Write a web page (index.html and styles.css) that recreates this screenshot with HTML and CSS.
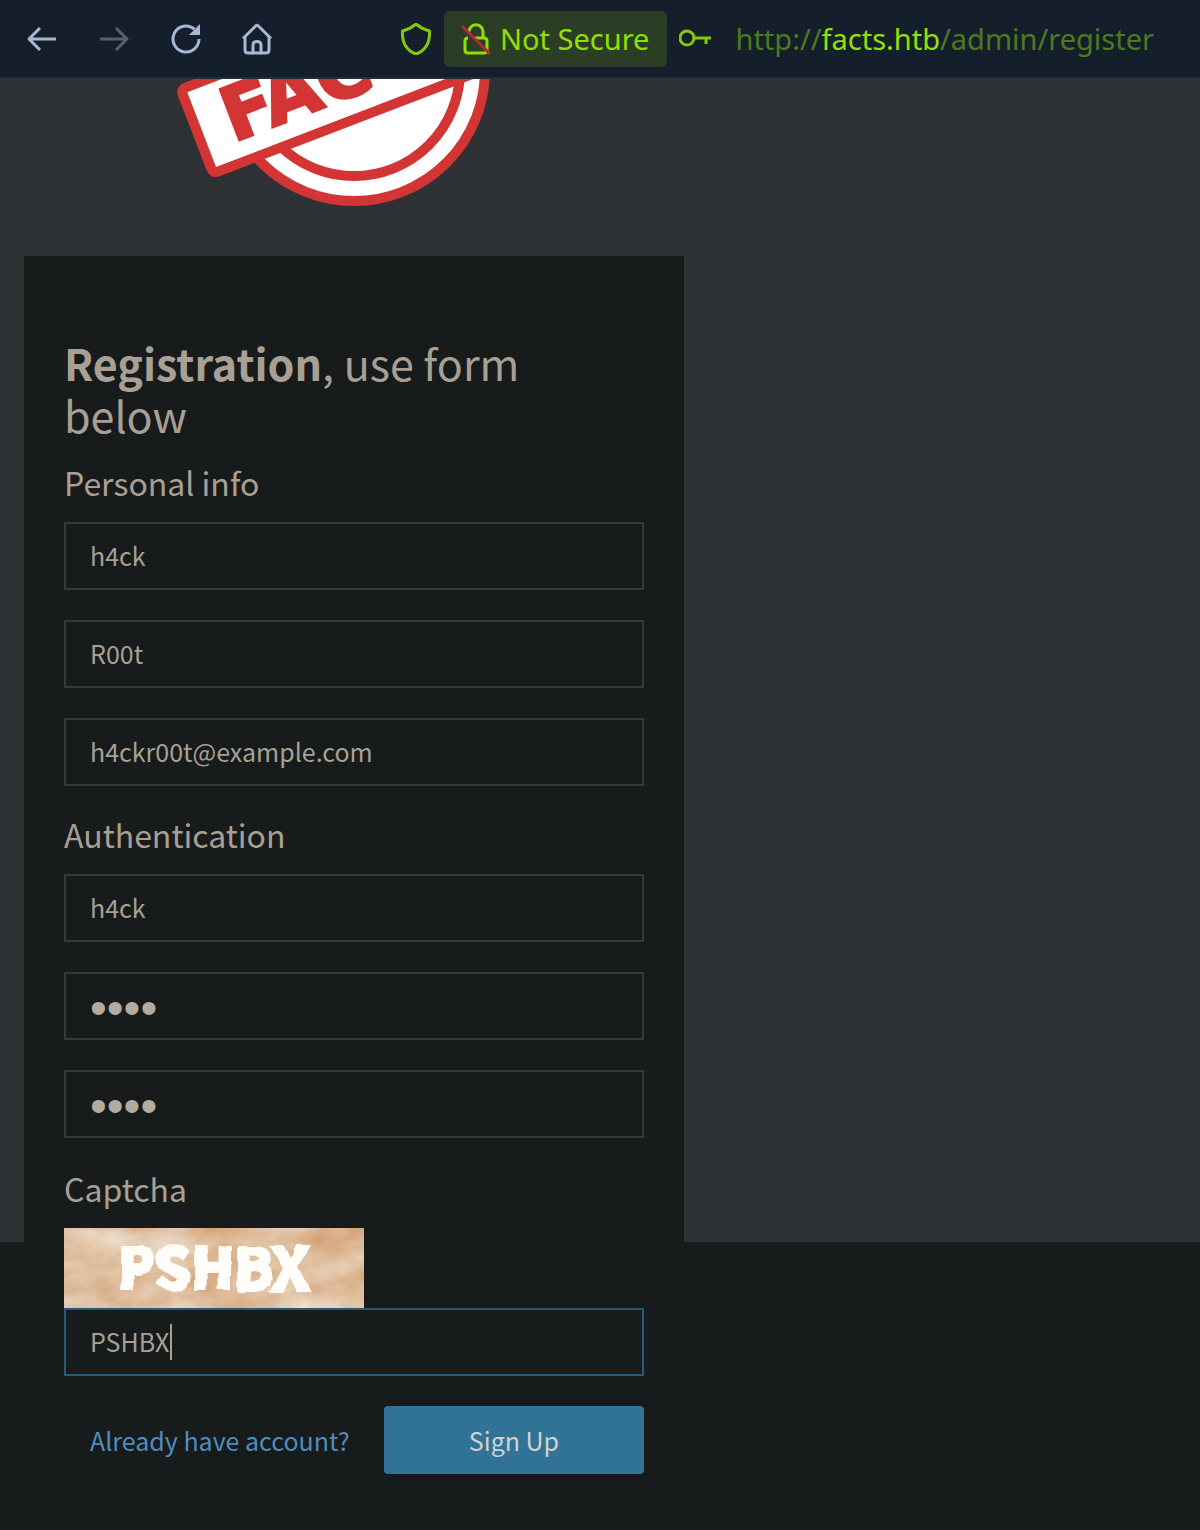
FILE: index.html
```
<!DOCTYPE html>
<html lang="en">
<head>
    <meta charset="UTF-8">
    <meta name="viewport" content="width=device-width, initial-scale=1.0">
    <title>Registration</title>
    <link rel="stylesheet" href="styles.css">
</head>
<body>
    <header class="toolbar">
        <nav class="nav-buttons">
            <button type="button" class="icon-button" aria-label="Back">
                <svg viewBox="0 0 32 32"><path d="M30 16H3M14 5L3 16L14 27"/></svg>
            </button>
            <button type="button" class="icon-button" aria-label="Forward" disabled>
                <svg viewBox="0 0 32 32"><path d="M2 16H29M18 5L29 16L18 27"/></svg>
            </button>
            <button type="button" class="icon-button" aria-label="Reload">
                <svg viewBox="0 0 32 32"><path d="M24.500 6.200A13 13 0 1 0 29 16"/><path class="solid" d="M30 1V12H19Z"/></svg>
            </button>
            <button type="button" class="icon-button" aria-label="Home">
                <svg viewBox="0 0 32 32"><path d="M1 15.500L13.600 3Q15 1.700 16.400 3L29 15.500M3 14V27Q3 30 6 30H24Q27 30 27 27V14M11 30V22Q11 18.500 15 18.500T19 22V30"/></svg>
            </button>
        </nav>

        <div class="address-bar">
            <button type="button" class="icon-button" aria-label="Tracking protection">
                <svg viewBox="0 0 32 32"><path d="M16 1Q22 6 29.500 8C30 18 27 27 16 31C5 27 2 18 2.500 8Q10 6 16 1Z"/></svg>
            </button>
            <button type="button" class="security">
                <svg viewBox="0 0 32 32">
                    <path d="M9 9A7 7 0 0 1 23 8.500V15M14 15H24Q27 15 27 18V27Q27 30 24 30H8Q5 30 5 27V18Q5 15 8 15"/>
                    <path class="slash" d="M2 3L30 31"/>
                </svg>
                Not Secure
            </button>
            <button type="button" class="icon-button" aria-label="Saved passwords">
                <svg viewBox="0 0 32 32"><circle cx="8" cy="15" r="7"/><path d="M15 15H32M27 15V21"/></svg>
            </button>
            <div class="url">http://<span class="domain">facts.htb</span>/admin/register</div>
        </div>
    </header>

    <main class="page">
        <div class="container">
            <svg class="logo" viewBox="0 0 660 128" aria-label="Facts">
                <g class="stamp">
                    <circle cx="330" cy="-9" r="131"/>
                    <circle cx="330" cy="-9" r="106"/>
                    <g transform="translate(192 88) rotate(-21)">
                        <rect x="-5" y="-85" width="320" height="90" rx="5"/>
                        <text x="25" y="-17">FAC</text>
                    </g>
                </g>
            </svg>

            <form class="card">
                <h3><strong>Registration</strong>, use form below</h3>

                <h4>Personal info</h4>
                <input type="text" class="form-control" name="first_name" aria-label="First name" value="h4ck">
                <input type="text" class="form-control" name="last_name" aria-label="Last name" value="R00t">
                <input type="email" class="form-control" name="email" aria-label="Email" value="h4ckr00t@example.com">

                <h4>Authentication</h4>
                <input type="text" class="form-control" name="username" aria-label="Username" value="h4ck">
                <input type="password" class="form-control" name="password" aria-label="Password" value="h4ck">
                <input type="password" class="form-control" name="password_confirmation" aria-label="Confirm password" value="h4ck">

                <div class="captcha-group">
                    <h4>Captcha</h4>
                    <svg class="captcha" viewBox="0 0 300 80" aria-label="Captcha">
                        <filter id="paper" x="0" y="0" width="100%" height="100%" color-interpolation-filters="sRGB">
                            <feTurbulence type="fractalNoise" baseFrequency="0.016 0.03" numOctaves="4" seed="8"/>
                            <feColorMatrix values="0.15 0 0 0 0.8  0.35 0 0 0 0.57  0.5 0 0 0 0.37  0 0 0 0 1"/>
                        </filter>
                        <filter id="rough" color-interpolation-filters="sRGB">
                            <feTurbulence type="fractalNoise" baseFrequency="0.04" numOctaves="1" seed="3"/>
                            <feDisplacementMap in="SourceGraphic" scale="8" xChannelSelector="R" yChannelSelector="G"/>
                        </filter>
                        <rect width="300" height="80" filter="url(#paper)"/>
                        <text x="54" y="61" filter="url(#rough)">PSHBX</text>
                    </svg>
                    <div class="field">
                        <input type="text" class="form-control active" name="captcha" aria-label="Captcha" value="PSHBX">
                        <span class="caret"></span>
                    </div>
                </div>

                <div class="actions">
                    <a href="#" class="login-link">Already have account?</a>
                    <button type="submit" class="btn-primary">Sign Up</button>
                </div>
            </form>
        </div>
    </main>
</body>
</html>
```
FILE: styles.css
```
* {
    box-sizing: border-box;
}
body {
    margin: 0;
    background-color: #171b1b;
    color: #a8a095;
    font-family: "Noto Sans CJK SC", "Open Sans", sans-serif;
    font-size: 25px;
}
button, input {
    font: inherit;
}

/* Browser toolbar */
.toolbar {
    display: flex;
    align-items: center;
    height: 79px;
    padding: 0 26px;
    background-color: #151e2b;
    border-bottom: 2px solid #222d3a;
    font-family: "Noto Sans", sans-serif;
    font-size: 29px;
}
.nav-buttons {
    display: flex;
    gap: 40px;
    margin-right: 126px;
    color: #a9b7d6;
}
.icon-button {
    display: flex;
    padding: 0;
    border: none;
    background: none;
    color: inherit;
}
.icon-button:disabled {
    color: #566071;
}
.toolbar svg {
    width: 32px;
    height: 32px;
    fill: none;
    stroke: currentColor;
    stroke-width: 3;
    stroke-linejoin: round;
}
.toolbar svg .solid {
    fill: currentColor;
    stroke: none;
}
.toolbar svg .slash {
    stroke: #b5253c;
}
.address-bar {
    display: flex;
    flex: 1;
    align-items: center;
    gap: 12px;
    color: #83c80c;
}
.security {
    display: flex;
    align-items: center;
    gap: 8px;
    height: 56px;
    padding: 0 18px 0 16px;
    border: none;
    border-radius: 6px;
    background-color: #2c3d25;
    color: #8fe000;
    white-space: nowrap;
}
.url {
    margin-left: 12px;
    color: #4c7a1e;
    white-space: nowrap;
}
.url .domain {
    color: #94e000;
}

/* Page */
.page {
    background: linear-gradient(#2e3235, #2e3235) no-repeat 0 0 / 100% 1163px;
}
.container {
    max-width: 708px;
    padding: 0 24px;
}
.logo {
    display: block;
    width: 100%;
    margin-bottom: 49px;
}
.stamp {
    fill: #fff;
    stroke: #d33434;
    stroke-width: 10;
}
.stamp text {
    fill: #d33434;
    stroke-width: 3;
    font-family: "DejaVu Sans", sans-serif;
    font-size: 74px;
    font-weight: bold;
}
.card {
    padding: 80px 40px 56px;
    background-color: #171b1b;
}
h3 {
    margin: 0 0 24px;
    font-size: 43px;
    font-weight: normal;
    line-height: 52px;
}
h4 {
    margin: 0 0 22px;
    font-size: 32px;
    font-weight: normal;
    line-height: 36px;
}
.form-control {
    display: block;
    width: 100%;
    height: 68px;
    margin-bottom: 30px;
    padding: 0 24px 2px;
    border: 2px solid #363a3d;
    background-color: transparent;
    color: #a8a095;
}
.form-control[type="password"] {
    padding: 2px 24px 0;
    color: #b3aba0;
    font-family: "Liberation Sans", sans-serif;
    font-size: 48px;
}
.form-control.active {
    border-color: #275a75;
}
.captcha-group {
    padding-top: 2px;
}
.captcha {
    display: block;
    width: 300px;
    height: 80px;
}
.captcha text {
    fill: #fffdfa;
    stroke: #fffdfa;
    stroke-width: 4;
    font-family: "Noto Sans CJK SC", sans-serif;
    font-size: 57px;
    font-weight: bold;
}
.field {
    position: relative;
}
.caret {
    position: absolute;
    top: 16px;
    left: 106px;
    width: 2px;
    height: 36px;
    background-color: #a8a095;
}
.actions {
    display: flex;
    align-items: center;
    justify-content: space-between;
    padding-left: 26px;
}
.login-link {
    color: #4f8dbf;
    text-decoration: none;
}
.btn-primary {
    width: 260px;
    height: 68px;
    border: none;
    border-radius: 4px;
    background-color: #317397;
    color: #d0d2d0;
}
```
